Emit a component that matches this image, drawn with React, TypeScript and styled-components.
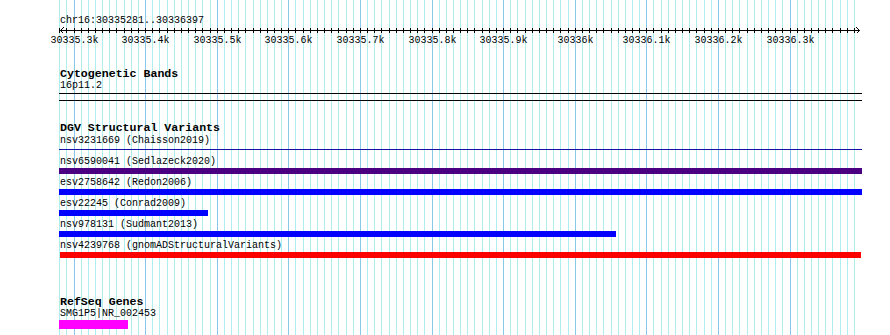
import React from 'react';
import styled, { createGlobalStyle } from 'styled-components';

const MINOR = '#afeeee';
const MAJOR = '#88c8ea';
const TICK_PX = 7.16; // 10 bp
const FIRST_TICK = 0.7;
const TICK_COUNT = 112;

const ticks = Array.from({ length: TICK_COUNT }, (_, k) => ({
  x: Math.floor(FIRST_TICK + TICK_PX * k),
  major: k % 10 === 2,
}));

const labels = [
  '30335.3k',
  '30335.4k',
  '30335.5k',
  '30335.6k',
  '30335.7k',
  '30335.8k',
  '30335.9k',
  '30336k',
  '30336.1k',
  '30336.2k',
  '30336.3k',
];

const gridImage = () => {
  const stops: string[] = [];
  let prev = 0;
  ticks.forEach(({ x, major }) => {
    const c = major ? MAJOR : MINOR;
    stops.push(`transparent ${prev}px ${x}px`, `${c} ${x}px ${x + 1}px`);
    prev = x + 1;
  });
  stops.push(`transparent ${prev}px 100%`);
  return `linear-gradient(to right, ${stops.join(', ')})`;
};

const variants = [
  { name: 'nsv3231669 (Chaisson2019)', color: '#1212a2', width: 803, height: 1, top: 2 },
  { name: 'nsv6590041 (Sedlazeck2020)', color: '#4b0082', width: 803, height: 6, top: 0 },
  { name: 'esv2758642 (Redon2006)', color: '#0000ff', width: 803, height: 6, top: 0 },
  { name: 'esv22245 (Conrad2009)', color: '#0000ff', width: 149, height: 6, top: 0 },
  { name: 'nsv978131 (Sudmant2013)', color: '#0000ff', width: 557, height: 6, top: 0 },
  { name: 'nsv4239768 (gnomADStructuralVariants)', color: '#ff0000', width: 801, height: 6, top: 0, inset: 1 },
];

const GlobalStyle = createGlobalStyle`
  html, body {
    margin: 0;
    padding: 0;
    background: #ffffff;
  }
  body {
    font-family: "Liberation Mono", "DejaVu Sans Mono", monospace;
    color: #000000;
  }
`;

const Page = styled.div`
  width: 890px;
  height: 335px;
  overflow: hidden;
  background: #ffffff;
`;

const Board = styled.div<{ $grid: string }>`
  margin-left: 59px;
  width: 803px;
  height: 335px;
  display: flex;
  flex-direction: column;
  background-image: ${(p) => p.$grid};
  background-repeat: no-repeat;
  background-size: 100% 100%;
`;

const Ruler = styled.div`
  padding-top: 15px;
`;

const Location = styled.div`
  font-size: 10px;
  line-height: 12px;
  padding-left: 1px;
`;

const Axis = styled.svg`
  display: block;
  width: 803px;
  height: 19px;
  overflow: visible;

  line {
    stroke: #000000;
    stroke-width: 1;
    shape-rendering: crispEdges;
  }

  text {
    font-family: "Liberation Mono", "DejaVu Sans Mono", monospace;
    font-size: 10px;
    fill: #000000;
  }
`;

const Track = styled.section<{ $gap: number }>`
  margin-top: ${(p) => p.$gap}px;
  display: flex;
  flex-direction: column;
`;

const TrackTitle = styled.h2<{ $lineHeight: number }>`
  margin: 0;
  padding-left: 1px;
  font-size: 11.6px;
  font-weight: bold;
  line-height: ${(p) => p.$lineHeight}px;
`;

const FeatureLabel = styled.div`
  font-size: 10px;
  line-height: 12px;
  padding-left: 1px;
  white-space: pre;
`;

const BandLine = styled.div<{ $gap: number }>`
  margin-top: ${(p) => p.$gap}px;
  height: 1px;
  background: #000000;
`;

const FeatureRow = styled.div`
  display: flex;
  flex-direction: column;
  padding-bottom: 3px;
`;

const BarSlot = styled.div<{ $height: number }>`
  height: ${(p) => p.$height}px;
`;

const Bar = styled.div<{ $color: string; $width: number; $height: number; $top?: number; $inset?: number }>`
  margin-top: ${(p) => p.$top ?? 0}px;
  margin-left: ${(p) => p.$inset ?? 0}px;
  width: ${(p) => p.$width}px;
  height: ${(p) => p.$height}px;
  background: ${(p) => p.$color};
`;

const ScaleBar = () => {
  const y = 3.5;
  const majors = ticks.filter((t) => t.major);
  return (
    <Axis viewBox="0 0 803 19">
      <line x1={1} y1={y} x2={801} y2={y} />
      <line x1={1.5} y1={y} x2={4.5} y2={0.5} />
      <line x1={1.5} y1={y} x2={4.5} y2={6.5} />
      <line x1={800.5} y1={y} x2={797.5} y2={0.5} />
      <line x1={800.5} y1={y} x2={797.5} y2={6.5} />
      {ticks.map((t) => (
        <line key={t.x} x1={t.x + 0.5} y1={1} x2={t.x + 0.5} y2={6} />
      ))}
      {majors.map((t, i) => (
        <text key={labels[i]} x={t.x + 0.5} y={16} textAnchor="middle">
          {labels[i]}
        </text>
      ))}
    </Axis>
  );
};

export default function App() {
  return (
    <Page>
      <GlobalStyle />
      <Board $grid={gridImage()}>
        <Ruler>
          <Location>chr16:30335281..30336397</Location>
          <ScaleBar />
        </Ruler>

        <Track $gap={21}>
          <TrackTitle $lineHeight={13}>Cytogenetic Bands</TrackTitle>
          <FeatureLabel>16p11.2</FeatureLabel>
          <BandLine $gap={1} />
          <BandLine $gap={6} />
        </Track>

        <Track $gap={20}>
          <TrackTitle $lineHeight={14}>DGV Structural Variants</TrackTitle>
          {variants.map((v) => (
            <FeatureRow key={v.name}>
              <FeatureLabel>{v.name}</FeatureLabel>
              <BarSlot $height={6}>
                <Bar $color={v.color} $width={v.width} $height={v.height} $top={v.top} $inset={v.inset} />
              </BarSlot>
            </FeatureRow>
          ))}
        </Track>

        <Track $gap={35}>
          <TrackTitle $lineHeight={12}>RefSeq Genes</TrackTitle>
          <FeatureLabel>SMG1P5|NR_002453</FeatureLabel>
          <Bar $color="#ff00ff" $width={69} $height={9} />
        </Track>
      </Board>
    </Page>
  );
}
